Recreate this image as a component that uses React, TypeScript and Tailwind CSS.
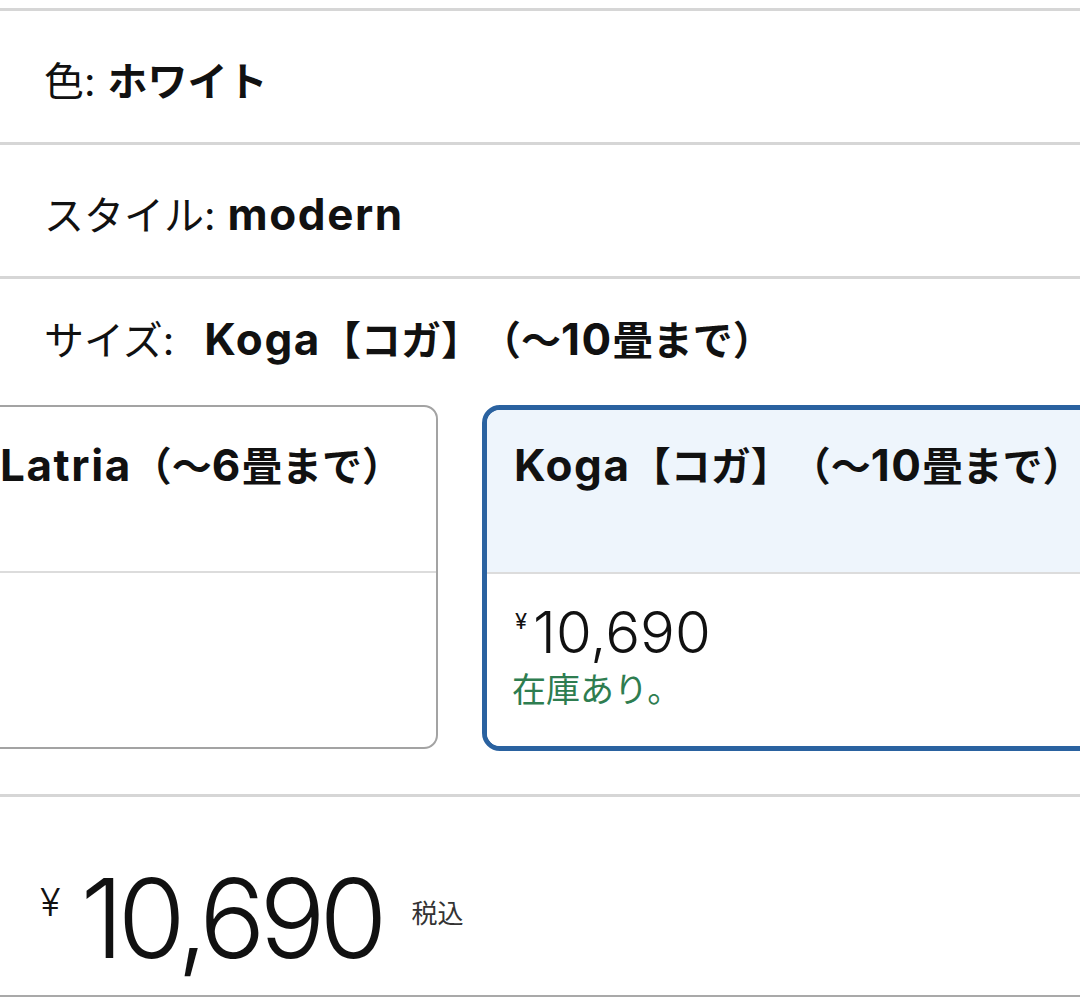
import React from 'react';

const jp = "font-[family-name:'Inter','Noto_Sans_CJK_JP',sans-serif]";
const num = "font-[family-name:'Inter','Liberation_Sans',sans-serif]";

// Latin words in the reference are set a little wider than Inter at the same size
function L({ children }: { children: React.ReactNode }) {
  return <span className="text-[44px] leading-[40px] tracking-[1.6px]">{children}</span>;
}

function Row({ label, value }: { label: string; value: React.ReactNode }) {
  return (
    <div className="flex h-[131px] items-center pl-[44px] pt-[10px] text-[40px] leading-[48px] text-[#111]">
      <span className="font-normal">{label}</span>
      <span className="ml-[12px] font-bold">{value}</span>
    </div>
  );
}

function Line({ className = 'bg-[#d6d6d6]' }: { className?: string }) {
  return <div className={`h-[3px] w-full ${className}`} />;
}

export default function App() {
  return (
    <div className={`h-[997px] w-[1080px] overflow-hidden bg-white [text-spacing-trim:space-all] ${jp}`}>
      <div className="h-[8px]" />
      <Line />
      <Row label="色:" value="ホワイト" />
      <Line />
      <Row label="スタイル:" value={<L>modern</L>} />
      <Line />

      <div className="flex h-[48px] items-center pl-[44px] mt-[38px] text-[40px] leading-[48px] text-[#111]">
        <span className="font-normal">サイズ:</span>
        <span className="ml-[30px] font-bold">
          <L>Koga</L>【コガ】（〜<L>10</L>畳まで）
        </span>
      </div>

      <div className="mt-[40px] flex gap-[44px]">
        <div className="-ml-[32px] flex h-[344px] w-[470px] shrink-0 flex-col overflow-hidden rounded-[14px] border-2 border-[#a3a3a3]">
          <div className="h-[166px] border-b-2 border-[#dcdcdc] pl-[30px] pt-[36px] text-[40px] font-bold leading-[48px] text-[#111]">
            <L>Latria</L>（〜<L>6</L>畳まで）
          </div>
          <div className="flex-1" />
        </div>

        <div className="flex h-[346px] w-[640px] shrink-0 flex-col overflow-hidden rounded-[18px] border-[5px] border-[#2a62a0]">
          <div className="h-[164px] border-b-2 border-[#dcdcdc] bg-[#eef5fc] pl-[27px] pt-[33px] text-[40px] font-bold leading-[48px] text-[#111]">
            <L>Koga</L>【コガ】（〜<L>10</L>畳まで）
          </div>
          <div className="flex-1 bg-white pl-[28px] pt-[28px]">
            <div className={`flex items-start text-[#111] ${num}`}>
              <span className="mt-[8px] mr-[6px] text-[22px] leading-none">¥</span>
              <span className="text-[58px] font-light leading-[60px]">10,690</span>
            </div>
            <div className="mt-[8px] -ml-[3px] text-[34px] leading-[40px] text-[#2e7d50]">在庫あり。</div>
          </div>
        </div>
      </div>

      <div className="mt-[43px]" />
      <Line />

      <div className="flex h-[198px] items-start pl-[40px] pt-[66px] text-[#111]">
        <span className={`mt-[20px] mr-[20px] text-[38px] leading-none ${num} font-light`}>¥</span>
        <span className={`text-[110px] font-light leading-[110px] tracking-[-6px] ${num}`}>10,690</span>
        <span className="ml-[30px] mt-[38px] text-[26px] leading-none text-[#333]">税込</span>
      </div>
      <Line className="bg-[#a9a9a9]" />
    </div>
  );
}
